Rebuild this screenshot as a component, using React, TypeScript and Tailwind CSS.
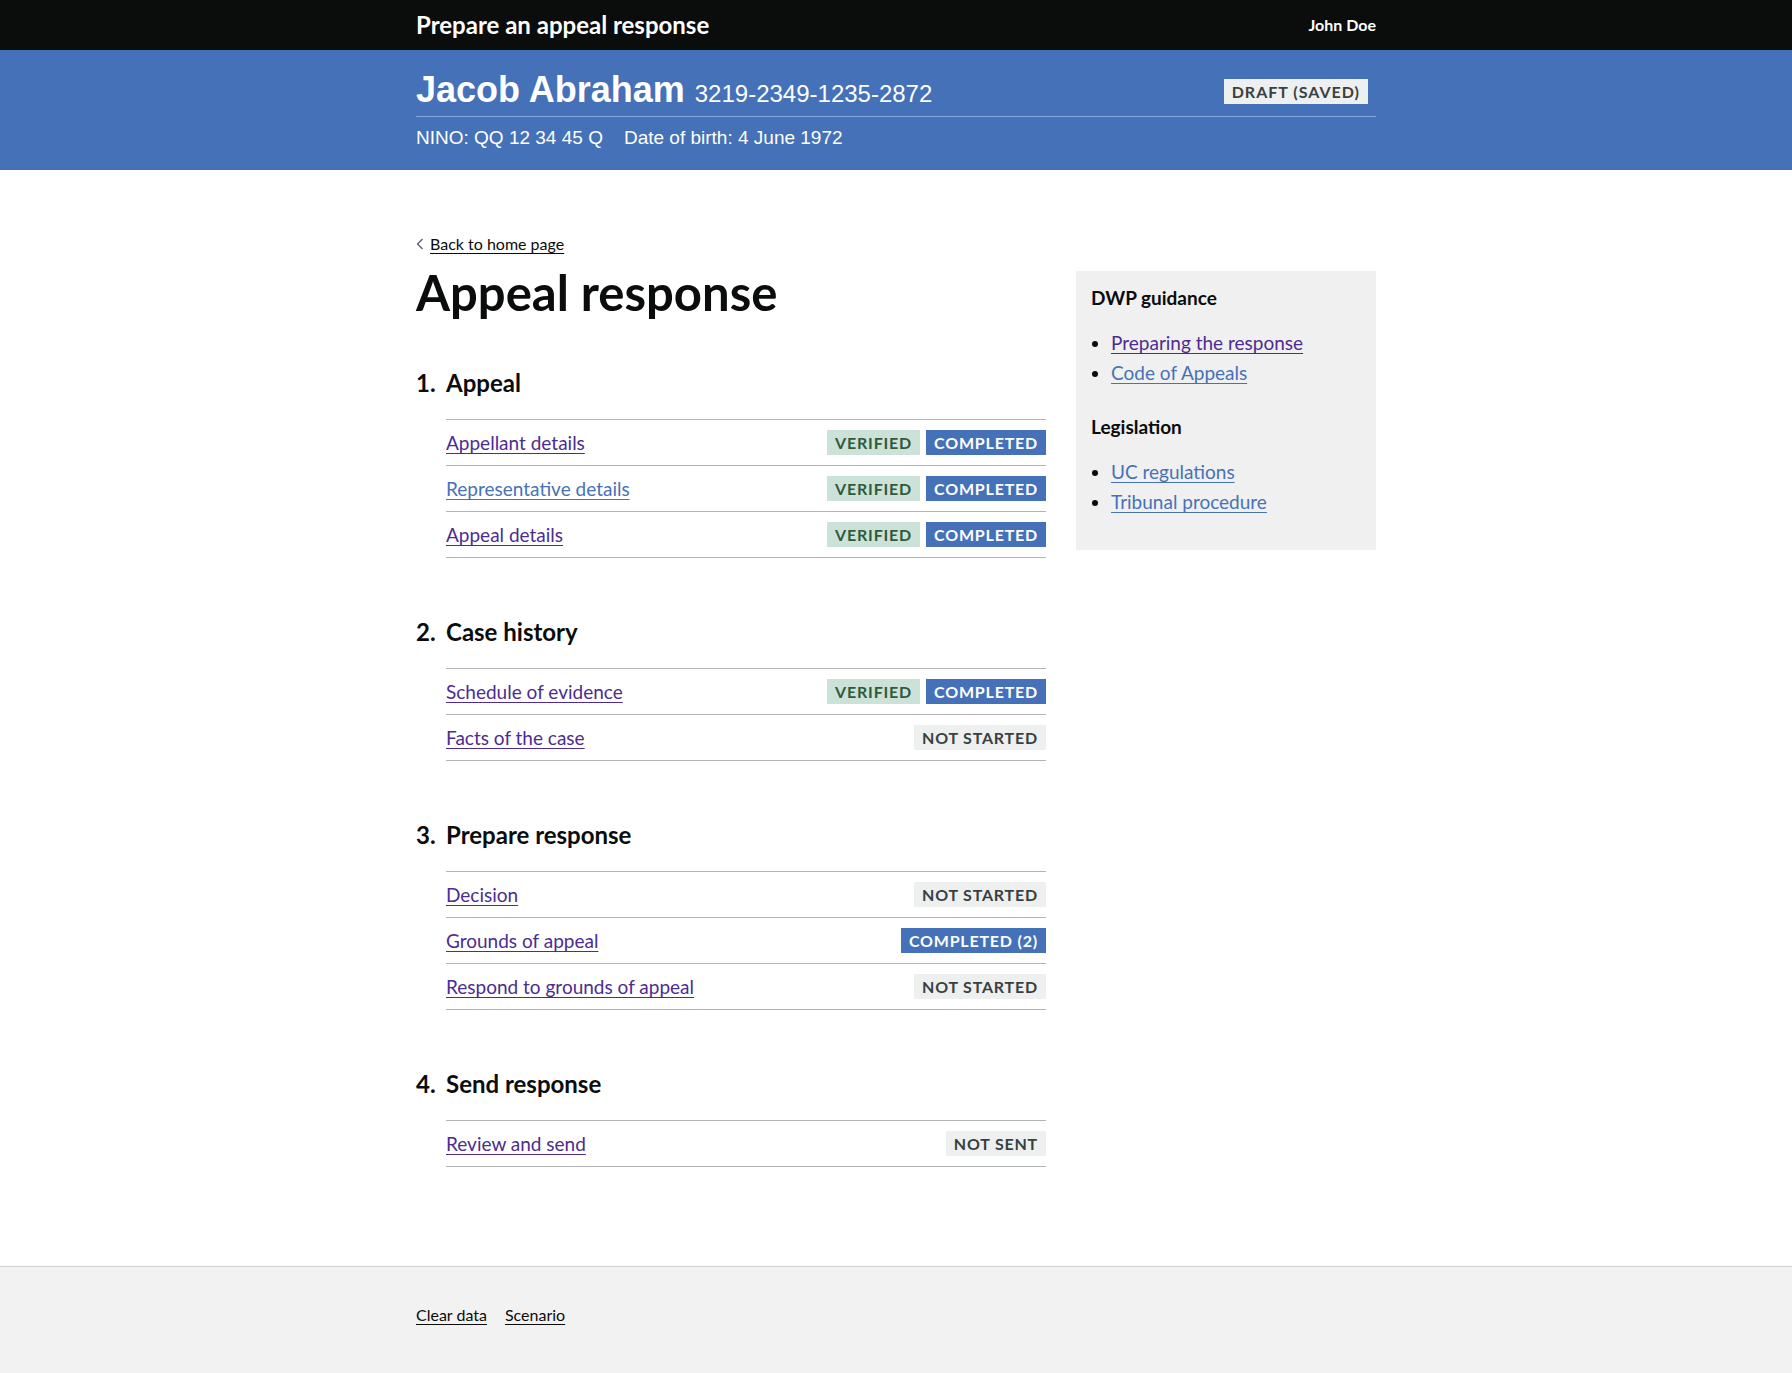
import React from 'react';

type Tag = 'verified' | 'completed' | 'notStarted';

interface Task {
  label: string;
  visited: boolean;
  tags: { kind: Tag; text: string }[];
}

interface Section {
  num: string;
  title: string;
  tasks: Task[];
}

const sections: Section[] = [
  {
    num: '1.',
    title: 'Appeal',
    tasks: [
      { label: 'Appellant details', visited: true, tags: [{ kind: 'verified', text: 'Verified' }, { kind: 'completed', text: 'Completed' }] },
      { label: 'Representative details', visited: false, tags: [{ kind: 'verified', text: 'Verified' }, { kind: 'completed', text: 'Completed' }] },
      { label: 'Appeal details', visited: true, tags: [{ kind: 'verified', text: 'Verified' }, { kind: 'completed', text: 'Completed' }] },
    ],
  },
  {
    num: '2.',
    title: 'Case history',
    tasks: [
      { label: 'Schedule of evidence', visited: true, tags: [{ kind: 'verified', text: 'Verified' }, { kind: 'completed', text: 'Completed' }] },
      { label: 'Facts of the case', visited: true, tags: [{ kind: 'notStarted', text: 'Not started' }] },
    ],
  },
  {
    num: '3.',
    title: 'Prepare response',
    tasks: [
      { label: 'Decision', visited: true, tags: [{ kind: 'notStarted', text: 'Not started' }] },
      { label: 'Grounds of appeal', visited: true, tags: [{ kind: 'completed', text: 'Completed (2)' }] },
      { label: 'Respond to grounds of appeal', visited: true, tags: [{ kind: 'notStarted', text: 'Not started' }] },
    ],
  },
  {
    num: '4.',
    title: 'Send response',
    tasks: [{ label: 'Review and send', visited: true, tags: [{ kind: 'notStarted', text: 'Not sent' }] }],
  },
];

const tagStyles: Record<Tag, string> = {
  verified: 'bg-[#cce2d8] text-[#2f5b3c]',
  completed: 'bg-[#4471b7] text-white',
  notStarted: 'bg-[#eeefef] text-[#383f43]',
};

const StatusTag = ({ kind, text }: { kind: Tag; text: string }) => (
  <strong
    className={`inline-block px-[8px] pt-[5px] pb-[4px] text-[16px] leading-[16px] font-bold uppercase tracking-[0.8px] ${tagStyles[kind]}`}
  >
    {text}
  </strong>
);

const linkBase = 'underline decoration-1 underline-offset-[3px]';

export default function App() {
  return (
    <div className="min-h-screen flex flex-col bg-white text-[#0b0c0c] font-['Lato',sans-serif]">
      {/* top bar */}
      <header className="bg-[#0b0c0c] text-white">
        <div className="w-[960px] mx-auto h-[50px] flex items-center justify-between">
          <span className="text-[24px] font-bold leading-[30px]">Prepare an appeal response</span>
          <span className="text-[16px] font-bold">John Doe</span>
        </div>
      </header>

      {/* claimant banner */}
      <div className="bg-[#4471b7] text-white font-['Liberation_Sans',Arial,sans-serif]">
        <div className="w-[960px] mx-auto pt-[20px] pb-[20px]">
          <div className="flex items-end justify-between pb-[6px] border-b border-[#86a6dd]">
            <div className="flex items-baseline">
              <span className="text-[36px] leading-[40px] font-bold">Jacob Abraham</span>
              <span className="text-[24px] leading-[30px] ml-[10px]">3219-2349-1235-2872</span>
            </div>
            <span className="mb-[6px] mr-[8px] bg-[#eeefef] text-[#383f43] px-[8px] pt-[5px] pb-[4px] text-[16px] leading-[16px] font-bold uppercase tracking-[1px] font-['Lato',sans-serif]">
              Draft (saved)
            </span>
          </div>
          <div className="mt-[9px] text-[19px] leading-[24px] flex gap-[21px]">
            <span>NINO: QQ 12 34 45 Q</span>
            <span>Date of birth: 4 June 1972</span>
          </div>
        </div>
      </div>

      <main className="w-[960px] mx-auto pt-[62px] pb-[99px]">
        <a href="#" className="inline-flex items-center text-[16px] leading-[20px] text-[#0b0c0c]">
          <svg width="9" height="12" viewBox="0 0 9 12" className="mr-[5px]">
            <polyline points="6.5,1 1.5,6 6.5,11" fill="none" stroke="#505a5f" strokeWidth="1.2" />
          </svg>
          <span className={linkBase}>Back to home page</span>
        </a>

        <div className="flex gap-[30px] mt-[15px]">
          <div className="w-[630px]">
            <h1 className="text-[49px] leading-[42px] font-bold mb-[55px]">Appeal response</h1>

            {sections.map((s, i) => (
              <section key={s.num} className={i > 0 ? 'mt-[59px]' : ''}>
                <h2 className="flex text-[24px] leading-[30px] font-bold mb-[21px]">
                  <span className="w-[30px]">{s.num}</span>
                  <span>{s.title}</span>
                </h2>
                <ul className="ml-[30px] border-b border-[#b1b4b6]">
                  {s.tasks.map((t) => (
                    <li key={t.label} className="h-[46px] border-t border-[#b1b4b6] flex items-center justify-between">
                      <a
                        href="#"
                        className={`text-[19px] leading-[25px] ${linkBase} ${t.visited ? 'text-[#4c2c92]' : 'text-[#4672b6]'}`}
                      >
                        {t.label}
                      </a>
                      <span className="flex gap-[6px]">
                        {t.tags.map((tag) => (
                          <StatusTag key={tag.text} kind={tag.kind} text={tag.text} />
                        ))}
                      </span>
                    </li>
                  ))}
                </ul>
              </section>
            ))}
          </div>

          <aside className="w-[300px] self-start bg-[#f0f0f0] px-[15px] pt-[14px] pb-[15px]">
            <h2 className="text-[19px] leading-[25px] font-bold mb-[20px]">DWP guidance</h2>
            <ul className="list-disc pl-[20px] text-[19px] leading-[25px] mb-[29px]">
              <li className="mb-[5px]">
                <a href="#" className={`${linkBase} text-[#4c2c92]`}>Preparing the response</a>
              </li>
              <li className="mb-[5px]">
                <a href="#" className={`${linkBase} text-[#4672b6]`}>Code of Appeals</a>
              </li>
            </ul>
            <h2 className="text-[19px] leading-[25px] font-bold mb-[20px]">Legislation</h2>
            <ul className="list-disc pl-[20px] text-[19px] leading-[25px] mb-[21px]">
              <li className="mb-[5px]">
                <a href="#" className={`${linkBase} text-[#4672b6]`}>UC regulations</a>
              </li>
              <li className="mb-[5px]">
                <a href="#" className={`${linkBase} text-[#4672b6]`}>Tribunal procedure</a>
              </li>
            </ul>
          </aside>
        </div>
      </main>

      <footer className="flex-1 bg-[#f2f2f2] border-t border-[#cfcfcf]">
        <div className="w-[960px] mx-auto pt-[38px] pb-[48px] flex gap-[18px] text-[16px] leading-[20px]">
          <a href="#" className={`${linkBase} text-[#0b0c0c]`}>Clear data</a>
          <a href="#" className={`${linkBase} text-[#0b0c0c]`}>Scenario</a>
        </div>
      </footer>
    </div>
  );
}
